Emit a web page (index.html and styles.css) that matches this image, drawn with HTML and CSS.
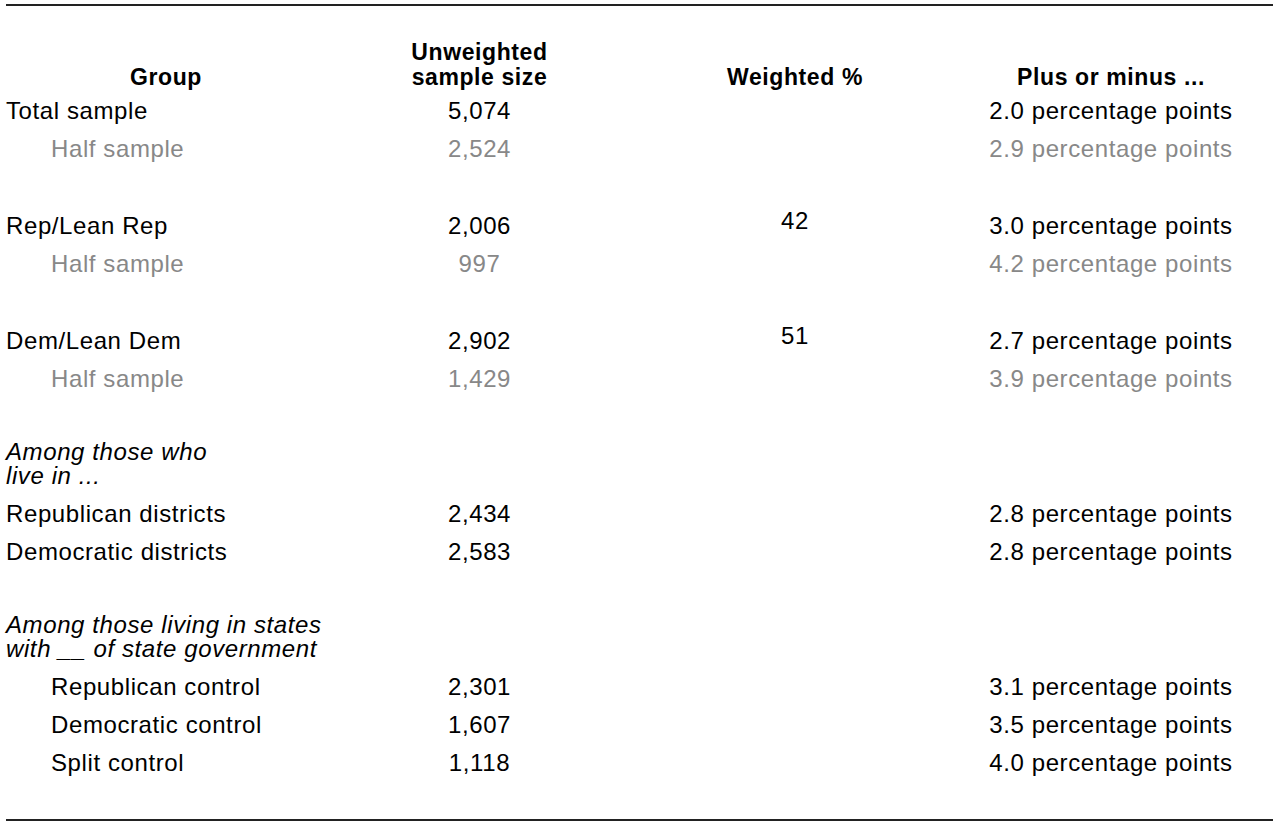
FILE: index.html
```html
<!DOCTYPE html>
<html lang="en">
<head>
<meta charset="utf-8">
<title>Sample sizes</title>
<link rel="stylesheet" href="styles.css">
</head>
<body>
<div class="table">
  <div class="row head">
    <div class="c1 hc">Group</div>
    <div class="c">Unweighted<br>sample size</div>
    <div class="c">Weighted %</div>
    <div class="c">Plus or minus ...</div>
  </div>
  <div class="row"><div class="c1">Total sample</div><div class="c">5,074</div><div class="c"></div><div class="c">2.0 percentage points</div></div>
  <div class="row sub"><div class="c1 ind">Half sample</div><div class="c">2,524</div><div class="c"></div><div class="c">2.9 percentage points</div></div>
  <div class="spacer"></div>
  <div class="row"><div class="c1">Rep/Lean Rep</div><div class="c">2,006</div><div class="c up">42</div><div class="c">3.0 percentage points</div></div>
  <div class="row sub"><div class="c1 ind">Half sample</div><div class="c">997</div><div class="c"></div><div class="c">4.2 percentage points</div></div>
  <div class="spacer"></div>
  <div class="row"><div class="c1">Dem/Lean Dem</div><div class="c">2,902</div><div class="c up">51</div><div class="c">2.7 percentage points</div></div>
  <div class="row sub"><div class="c1 ind">Half sample</div><div class="c">1,429</div><div class="c"></div><div class="c">3.9 percentage points</div></div>
  <div class="spacer"></div>
  <div class="label">Among those who<br>live in ...</div>
  <div class="row"><div class="c1">Republican districts</div><div class="c">2,434</div><div class="c"></div><div class="c">2.8 percentage points</div></div>
  <div class="row"><div class="c1">Democratic districts</div><div class="c">2,583</div><div class="c"></div><div class="c">2.8 percentage points</div></div>
  <div class="spacer"></div>
  <div class="label">Among those living in states<br>with __ of state government</div>
  <div class="row"><div class="c1 ind">Republican control</div><div class="c">2,301</div><div class="c"></div><div class="c">3.1 percentage points</div></div>
  <div class="row"><div class="c1 ind">Democratic control</div><div class="c">1,607</div><div class="c"></div><div class="c">3.5 percentage points</div></div>
  <div class="row"><div class="c1 ind">Split control</div><div class="c">1,118</div><div class="c"></div><div class="c">4.0 percentage points</div></div>
  <div class="spacer last"></div>
</div>
</body>
</html>
```
FILE: styles.css
```css
html, body {
  margin: 0;
  padding: 0;
  background: #fff;
}
body {
  font-family: "Liberation Sans", Arial, sans-serif;
  font-size: 24px;
  letter-spacing: 0.6px;
  color: #000;
}
.table {
  margin: 4px 0 0 6px;
  width: 1267px;
  border-top: 2px solid #222;
  border-bottom: 2px solid #222;
}
.row {
  display: grid;
  grid-template-columns: 324px 299px 332px 300px;
  height: 38px;
  align-items: center;
  line-height: 24px;
  white-space: nowrap;
}
.c {
  text-align: center;
}
.ind {
  padding-left: 45px;
}
.sub {
  color: #888;
}
.up {
  padding-bottom: 10px;
}
.head {
  height: 86px;
  align-items: end;
  font-weight: bold;
  font-size: 23px;
  letter-spacing: 0.6px;
  line-height: 25px;
  box-sizing: border-box;
  padding-bottom: 2px;
}
.hc {
  text-align: center;
  padding-right: 4px;
}
.spacer {
  height: 39px;
}
.spacer.last {
  height: 37px;
}
.label {
  font-style: italic;
  line-height: 24px;
  padding: 3px 0 7px 0;
  white-space: nowrap;
}
```
